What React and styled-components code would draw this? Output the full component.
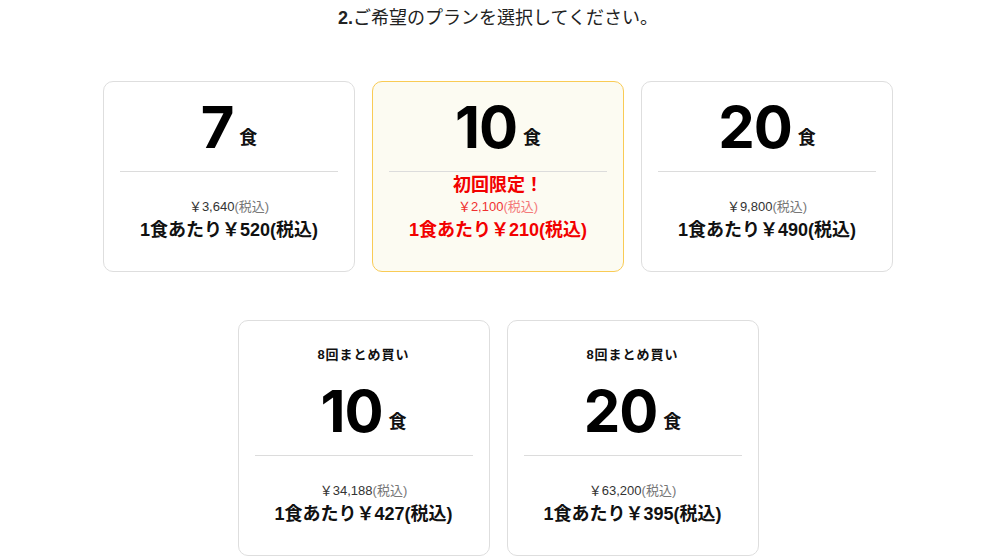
import styled, { createGlobalStyle } from "styled-components";

const GlobalStyle = createGlobalStyle`
  body {
    margin: 0;
    background: #fff;
    font-family: "Liberation Sans", "Noto Sans CJK JP", sans-serif;
    color: #111;
  }
`;

const PageUI = styled.div`
  padding: 6px 0 0 8px;
  display: flex;
  flex-direction: column;
  align-items: center;
`;

const TitleUI = styled.h2`
  margin: 0;
  font-size: 18px;
  font-weight: 400;
  line-height: 24px;
  color: #222;

  b {
    font-weight: 700;
  }
`;

const RowUI = styled.div`
  display: flex;
  justify-content: center;
  gap: 17px;
  margin-top: ${props => props.top}px;
`;

const CardUI = styled.div`
  width: 252px;
  box-sizing: border-box;
  padding: 15px 16px 27px;
  border-radius: 10px;
  border: 1px solid ${props => (props.special ? "#f9cb55" : "#dedede")};
  background: ${props => (props.special ? "#fcfbf2" : "#fff")};
  display: flex;
  flex-direction: column;
  align-items: stretch;
  text-align: center;
`;

const LabelUI = styled.div`
  padding: 10px 0 17px;
  font-size: 13px;
  line-height: 18px;
  font-weight: 700;
  letter-spacing: 1px;
  color: #111;
`;

const CountUI = styled.div`
  height: 60px;
  display: flex;
  justify-content: center;
  align-items: flex-end;
  gap: 6px;
`;

const NumberUI = styled.span`
  font-family: Inter, "Liberation Sans", sans-serif;
  font-size: 58px;
  line-height: 60px;
  font-weight: 700;
  letter-spacing: -1px;
  color: #000;
`;

const UnitUI = styled.span`
  margin-bottom: 12px;
  font-family: "Noto Sans CJK JP", sans-serif;
  font-size: 18px;
  line-height: 18px;
  font-weight: 700;
  color: #111;
`;

const DividerUI = styled.hr`
  margin: 14px 0 0;
  border: none;
  border-top: 1px solid #dcdcdc;
`;

const PromoUI = styled.div`
  height: 26px;
  line-height: 26px;
  font-size: 18px;
  font-weight: 700;
  color: #f20000;
`;

const PriceUI = styled.div`
  font-size: 13px;
  line-height: 18px;
  color: ${props => (props.red ? "#f03030" : "#333")};

  span {
    color: ${props => (props.red ? "#f47a7a" : "#777")};
  }
`;

const PerMealUI = styled.div`
  font-size: 18px;
  line-height: 28px;
  font-weight: 700;
  color: ${props => (props.red ? "#f20000" : "#111")};
`;

const plansTop = [
  { count: 7, price: "3,640", per: "520" },
  { count: 10, price: "2,100", per: "210", special: true },
  { count: 20, price: "9,800", per: "490" },
];

const plansBottom = [
  { count: 10, price: "34,188", per: "427", label: "8回まとめ買い" },
  { count: 20, price: "63,200", per: "395", label: "8回まとめ買い" },
];

function PlanCard({ plan }) {
  return (
    <CardUI special={plan.special}>
      {plan.label && <LabelUI>{plan.label}</LabelUI>}
      <CountUI>
        <NumberUI>{plan.count}</NumberUI>
        <UnitUI>食</UnitUI>
      </CountUI>
      <DividerUI />
      <PromoUI>{plan.special ? "初回限定！" : ""}</PromoUI>
      <PriceUI red={plan.special}>
        ￥{plan.price}<span>(税込)</span>
      </PriceUI>
      <PerMealUI red={plan.special}>1食あたり￥{plan.per}(税込)</PerMealUI>
    </CardUI>
  );
}

export default function App() {
  return (
    <PageUI>
      <GlobalStyle />
      <TitleUI>
        <b>2.</b>ご希望のプランを選択してください。
      </TitleUI>
      <RowUI top={51}>
        {plansTop.map((p, i) => (
          <PlanCard key={i} plan={p} />
        ))}
      </RowUI>
      <RowUI top={48}>
        {plansBottom.map((p, i) => (
          <PlanCard key={i} plan={p} />
        ))}
      </RowUI>
    </PageUI>
  );
}
